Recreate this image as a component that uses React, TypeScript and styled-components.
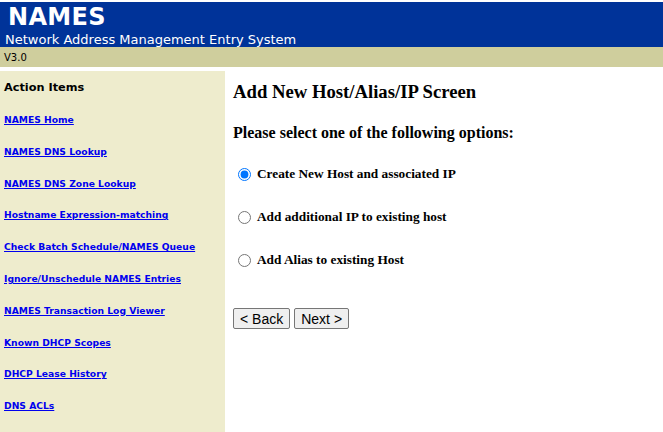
import styled, { createGlobalStyle } from 'styled-components';

const GlobalStyle = createGlobalStyle`
  html, body {
    margin: 0;
    padding: 0;
    background: #ffffff;
  }
  body {
    font-family: "DejaVu Sans", Verdana, sans-serif;
  }
`;

const Page = styled.div`
  display: flex;
  flex-direction: column;
  width: 663px;
  height: 432px;
  overflow: hidden;
  padding-top: 2px;
  box-sizing: border-box;
`;

const Banner = styled.div`
  background: #003399;
  color: #ffffff;
  height: 45px;
  padding: 0 5px;
  display: flex;
  flex-direction: column;
  box-sizing: border-box;
`;

const Logo = styled.div`
  font-family: "DejaVu Sans", Verdana, sans-serif;
  font-weight: bold;
  font-size: 24px;
  line-height: 30px;
  padding-left: 3px;
  letter-spacing: 0.3px;
`;

const Subtitle = styled.div`
  font-size: 13px;
  line-height: 15px;
`;

const VersionBar = styled.div`
  background: #cfce9d;
  height: 20px;
  padding: 0 4px;
  font-size: 10px;
  line-height: 21px;
  color: #000000;
`;

const Body = styled.div`
  display: flex;
  flex: 1;
  margin-top: 4px;
  min-height: 0;
`;

const Sidebar = styled.nav`
  width: 225px;
  background: #eeeccd;
  padding: 10px 4px 0;
  box-sizing: border-box;
  display: flex;
  flex-direction: column;
`;

const SideTitle = styled.div`
  font-weight: bold;
  font-size: 11.3px;
  line-height: 14px;
  color: #000000;
  margin-bottom: 18px;
`;

const SideLink = styled.a`
  font-weight: bold;
  font-size: 9.2px;
  line-height: 14px;
  height: 31.8px;
  flex-shrink: 0;
  color: #0000ee;
  text-decoration: underline;
  white-space: nowrap;
`;

const Main = styled.main`
  flex: 1;
  padding: 10px 0 0 8px;
  font-family: "Liberation Serif", "Times New Roman", serif;
  color: #000000;
`;

const Heading = styled.h3`
  font-size: 18.7px;
  font-weight: bold;
  margin: 0 0 20px;
  line-height: 22px;
`;

const Prompt = styled.h4`
  font-size: 16px;
  font-weight: bold;
  margin: 0 0 22px;
  line-height: 20px;
`;

const OptionList = styled.div`
  display: flex;
  flex-direction: column;
  gap: 25px;
`;

const Option = styled.label`
  display: flex;
  align-items: center;
  gap: 6px;
  font-size: 13.3px;
  font-weight: bold;
  line-height: 18px;
`;

const Radio = styled.input`
  width: 13px;
  height: 13px;
  margin: 0 0 0 5px;
  accent-color: #0075ff;
`;

const ButtonRow = styled.div`
  display: flex;
  gap: 4px;
  margin-top: 39px;
`;

const Button = styled.button`
  font-family: "Liberation Sans", Arial, sans-serif;
  font-size: 14px;
  height: 21px;
  padding: 0 6px;
  border: 1px solid #767676;
  border-radius: 2px;
  background: #efefef;
  color: #000000;
`;

const links = [
  'NAMES Home',
  'NAMES DNS Lookup',
  'NAMES DNS Zone Lookup',
  'Hostname Expression-matching',
  'Check Batch Schedule/NAMES Queue',
  'Ignore/Unschedule NAMES Entries',
  'NAMES Transaction Log Viewer',
  'Known DHCP Scopes',
  'DHCP Lease History',
  'DNS ACLs',
];

const options = [
  'Create New Host and associated IP',
  'Add additional IP to existing host',
  'Add Alias to existing Host',
];

const App = () => {
  return (
    <Page>
      <GlobalStyle />
      <Banner>
        <Logo>NAMES</Logo>
        <Subtitle>Network Address Management Entry System</Subtitle>
      </Banner>
      <VersionBar>V3.0</VersionBar>
      <Body>
        <Sidebar>
          <SideTitle>Action Items</SideTitle>
          {links.map((l) => (
            <SideLink key={l} href="#">
              {l}
            </SideLink>
          ))}
        </Sidebar>
        <Main>
          <Heading>Add New Host/Alias/IP Screen</Heading>
          <Prompt>Please select one of the following options:</Prompt>
          <OptionList>
            {options.map((o, i) => (
              <Option key={o}>
                <Radio type="radio" name="action" defaultChecked={i === 0} />
                {o}
              </Option>
            ))}
          </OptionList>
          <ButtonRow>
            <Button>&lt; Back</Button>
            <Button>Next &gt;</Button>
          </ButtonRow>
        </Main>
      </Body>
    </Page>
  );
};

export default App;
